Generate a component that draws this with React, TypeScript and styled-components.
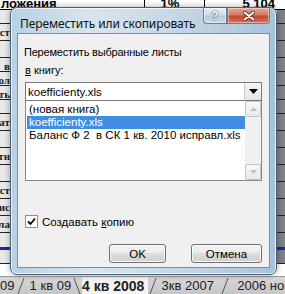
import styled, { createGlobalStyle } from "styled-components";

const GlobalStyle = createGlobalStyle`
  html, body {
    margin: 0;
    padding: 0;
    overflow: hidden;
  }
`;

const Desktop = styled.div`
  position: relative;
  width: 285px;
  height: 294px;
  overflow: hidden;
  background: #ffffff;
  font-family: "Liberation Sans", Arial, sans-serif;
  display: flex;
  flex-direction: column;
`;

const Sheet = styled.div`
  flex: 1;
  display: flex;
  flex-direction: column;
  overflow: hidden;
`;

const TopRow = styled.div`
  height: 9px;
  flex: none;
  display: grid;
  grid-template-columns: 145px 60px 1fr;
  border-bottom: 1px solid #000;
  font-weight: bold;
  font-size: 13px;
  line-height: 7px;
  overflow: hidden;
`;

const TopCell = styled.div<{ $align?: string }>`
  border-right: 1px solid #000;
  text-align: ${({ $align }) => $align || "left"};
  padding: 0 10px 0 1px;
  overflow: hidden;
  white-space: nowrap;
  &:last-child {
    border-right: none;
  }
`;

const SheetRow = styled.div<{ $h: number; $blue?: boolean }>`
  height: ${({ $h }) => $h}px;
  flex: none;
  display: flex;
  justify-content: space-between;
  border-bottom: ${({ $blue }) => ($blue ? "3px solid #1a2aa0" : "1px solid #222")};
  box-sizing: border-box;
`;

const LeftCell = styled.div`
  width: 10px;
  overflow: hidden;
  font-family: "Liberation Serif", serif;
  font-weight: bold;
  font-size: 11px;
  line-height: 16px;
  white-space: nowrap;
  direction: rtl;
  color: #222;
  background: #e9e9e9;
`;

const RightCell = styled.div`
  width: 8px;
  background: #7d8288;
`;

const TabBar = styled.div`
  height: 17px;
  flex: none;
  display: flex;
  align-items: center;
  background: linear-gradient(#d8d8d8, #c6c6c6);
  border-top: 1px solid #9a9a9a;
  font-family: "Liberation Sans", Arial, sans-serif;
  font-size: 13px;
  color: #222;
  white-space: nowrap;
  overflow: hidden;
`;

const SheetTab = styled.span<{ $active?: boolean; $w: number }>`
  flex: none;
  width: ${({ $w }) => $w}px;
  font-weight: ${({ $active }) => ($active ? "bold" : "normal")};
  font-size: ${({ $active }) => ($active ? 14 : 13)}px;
  background: ${({ $active }) => ($active ? "#f4f4f4" : "transparent")};
  padding-top: 1px;
  line-height: 16px;
`;

const Slant = ({ back }: { back?: boolean }) => (
  <svg width="10" height="17" viewBox="0 0 10 17" style={{ flex: "none" }}>
    <line x1={back ? 2 : 8} y1="1" x2={back ? 8 : 2} y2="17" stroke="#555" strokeWidth="1" />
  </svg>
);

/* dialog window over the sheet */
const Window = styled.div`
  position: absolute;
  left: 10px;
  top: 7px;
  width: 267px;
  height: 268px;
  box-sizing: border-box;
  border: 1px solid #4d5f74;
  border-radius: 7px;
  padding: 0 6px 6px;
  display: flex;
  flex-direction: column;
  background: linear-gradient(90deg, #b9d0e2 0%, #d7e5ef 30%, #c7d8e6 60%, #a9c3d9 100%);
  box-shadow: inset 0 0 0 1px rgba(255, 255, 255, 0.7), 0 0 6px rgba(0, 0, 0, 0.35);
`;

const TitleBar = styled.div`
  height: 25px;
  flex: none;
  display: flex;
  align-items: flex-start;
  justify-content: space-between;
`;

const Title = styled.span`
  font-family: "Noto Sans", "Liberation Sans", sans-serif;
  font-size: 12px;
  color: #111;
  margin: 7px 0 0 3px;
  letter-spacing: -0.1px;
`;

const CaptionButtons = styled.div`
  display: flex;
`;

const CaptionButton = styled.div<{ $close?: boolean }>`
  width: ${({ $close }) => ($close ? 43 : 24)}px;
  height: 16px;
  box-sizing: border-box;
  border: 1px solid #6d7c8c;
  border-top: none;
  border-radius: ${({ $close }) => ($close ? "0 0 4px 0" : "0 0 0 4px")};
  background: ${({ $close }) =>
    $close
      ? "linear-gradient(#e4a292 0%, #d67a67 45%, #c24a30 55%, #d6705a 100%)"
      : "linear-gradient(#e6eef5 0%, #d0dce8 45%, #b9c9d8 55%, #cbd8e4 100%)"};
  display: flex;
  align-items: center;
  justify-content: center;
  box-shadow: inset 0 0 0 1px rgba(255, 255, 255, 0.45);
`;

const HelpGlyph = styled.span`
  font-size: 12px;
  font-weight: bold;
  color: #fff;
  text-shadow: 0 0 1px #333, 0 0 1px #333;
`;

const Client = styled.div`
  flex: 1;
  background: #f0f0f0;
  border: 1px solid #7f8d9c;
  padding: 12px 7px 0 6px;
  display: flex;
  flex-direction: column;
  font-family: "Liberation Sans", Arial, sans-serif;
  font-size: 11px;
  color: #000;
`;

const Caption = styled.div`
  line-height: 13px;
  height: 13px;
  letter-spacing: -0.2px;
`;

const Label = styled.div`
  margin-top: 5px;
  line-height: 13px;
  height: 13px;
  padding-left: 1px;
`;

const Under = styled.span`
  text-decoration: underline;
`;

const Combo = styled.div`
  margin-top: 5px;
  margin-left: 1px;
  height: 19px;
  box-sizing: border-box;
  border: 1px solid #7a7a7a;
  background: #fff;
  display: flex;
  align-items: center;
  justify-content: space-between;
`;

const ComboText = styled.span`
  padding-left: 2px;
  font-size: 11.5px;
`;

const ComboArrow = styled.div`
  width: 16px;
  height: 17px;
  display: flex;
  align-items: center;
  justify-content: center;
  border-left: 1px solid #c8c8c8;
  background: linear-gradient(#f6f6f6, #e4e4e4);
`;

const ListBox = styled.div`
  margin-left: 1px;
  height: 80px;
  box-sizing: border-box;
  border: 1px solid #828790;
  border-top: none;
  background: #fff;
  display: flex;
`;

const Items = styled.div`
  flex: 1;
  padding: 2px 0 0 1px;
`;

const Item = styled.div<{ $selected?: boolean }>`
  height: 13px;
  line-height: 13px;
  padding-left: 2px;
  font-size: 11.5px;
  white-space: nowrap;
  background: ${({ $selected }) => ($selected ? "#3d8ee4" : "transparent")};
  color: ${({ $selected }) => ($selected ? "#fff" : "#000")};
`;

const ScrollBar = styled.div`
  width: 16px;
  display: flex;
  flex-direction: column;
  justify-content: space-between;
  background-color: #f3f3f3;
  background-image: repeating-conic-gradient(#e6e6e6 0% 25%, #fafafa 0% 50%);
  background-size: 2px 2px;
`;

const ScrollButton = styled.div`
  height: 16px;
  box-sizing: border-box;
  border: 1px solid #c5c5c5;
  border-radius: 2px;
  background: linear-gradient(#f8f8f8, #e9e9e9);
  display: flex;
  align-items: center;
  justify-content: center;
`;

const CheckRow = styled.label`
  margin-top: 34px;
  margin-left: 1px;
  display: flex;
  align-items: center;
  gap: 4px;
  height: 13px;
`;

const CheckBox = styled.span`
  width: 13px;
  height: 13px;
  box-sizing: border-box;
  border: 1px solid #8e8f8f;
  background: #fff;
  display: flex;
  align-items: center;
  justify-content: center;
`;

const CheckText = styled.span`
  font-size: 11.5px;
`;

const Buttons = styled.div`
  margin-top: 16px;
  display: flex;
  justify-content: flex-end;
  gap: 25px;
`;

const PushButton = styled.div<{ $w: number }>`
  width: ${({ $w }) => $w}px;
  height: 19px;
  box-sizing: border-box;
  border: 1px solid #707070;
  border-radius: 3px;
  background: linear-gradient(#f2f2f2 0%, #ebebeb 49%, #dddddd 50%, #cfcfcf 100%);
  box-shadow: inset 0 0 0 1px rgba(255, 255, 255, 0.8);
  display: flex;
  align-items: center;
  justify-content: center;
  font-size: 11.5px;
`;

const leftText = ["", "ост", "", "в", "кол", "ть", "", "рат", "", "тн", "", "ст", "рис", "ла", "", ""];
const rowHeights = [14, 17, 17, 14, 14, 14, 14, 17, 17, 17, 17, 17, 17, 17, 17, 14];

export default function App() {
  return (
    <Desktop>
      <GlobalStyle />
      <Sheet>
        <TopRow>
          <TopCell>ложения</TopCell>
          <TopCell $align="center">1%</TopCell>
          <TopCell $align="right">5 104</TopCell>
        </TopRow>
        {rowHeights.map((h, i) => (
          <SheetRow key={i} $h={h} $blue={i === 14}>
            <LeftCell>{leftText[i]}</LeftCell>
            <RightCell />
          </SheetRow>
        ))}
      </Sheet>
      <TabBar>
        <SheetTab $w={16}>09</SheetTab>
        <Slant />
        <SheetTab $w={46}>&nbsp;1 кв 09</SheetTab>
        <Slant back />
        <SheetTab $active $w={66}>4 кв 2008</SheetTab>
        <Slant />
        <SheetTab $w={62}>&nbsp;3кв 2007</SheetTab>
        <Slant />
        <SheetTab $w={70}>&nbsp;&nbsp;2006 нов</SheetTab>
      </TabBar>

      <Window>
        <TitleBar>
          <Title>Переместить или скопировать</Title>
          <CaptionButtons>
            <CaptionButton>
              <HelpGlyph>?</HelpGlyph>
            </CaptionButton>
            <CaptionButton $close>
              <svg width="12" height="10" viewBox="0 0 12 10">
                <path d="M1.5 1.5 L10.5 8.5 M10.5 1.5 L1.5 8.5" stroke="#5a2a20" strokeWidth="3.6" strokeLinecap="round" />
                <path d="M1.5 1.5 L10.5 8.5 M10.5 1.5 L1.5 8.5" stroke="#fff" strokeWidth="2" strokeLinecap="round" />
              </svg>
            </CaptionButton>
          </CaptionButtons>
        </TitleBar>
        <Client>
          <Caption>Переместить выбранные листы</Caption>
          <Label>
            <Under>в</Under> книгу:
          </Label>
          <Combo>
            <ComboText>koefficienty.xls</ComboText>
            <ComboArrow>
              <svg width="9" height="5" viewBox="0 0 9 5">
                <path d="M0 0 H9 L4.5 5 Z" fill="#000" />
              </svg>
            </ComboArrow>
          </Combo>
          <ListBox>
            <Items>
              <Item>(новая книга)</Item>
              <Item $selected>koefficienty.xls</Item>
              <Item>Баланс Ф 2&nbsp; в СК 1 кв. 2010 исправл.xls</Item>
            </Items>
            <ScrollBar>
              <ScrollButton>
                <svg width="7" height="4" viewBox="0 0 7 4">
                  <path d="M0 4 H7 L3.5 0 Z" fill="#c2c2c2" />
                </svg>
              </ScrollButton>
              <ScrollButton>
                <svg width="7" height="4" viewBox="0 0 7 4">
                  <path d="M0 0 H7 L3.5 4 Z" fill="#c2c2c2" />
                </svg>
              </ScrollButton>
            </ScrollBar>
          </ListBox>
          <CheckRow>
            <CheckBox>
              <svg width="9" height="9" viewBox="0 0 9 9">
                <path d="M1 4.5 L3.5 7 L8 1.5" stroke="#000" strokeWidth="1.8" fill="none" />
              </svg>
            </CheckBox>
            <CheckText>
              Создавать <Under>к</Under>опию
            </CheckText>
          </CheckRow>
          <Buttons>
            <PushButton $w={57}>OK</PushButton>
            <PushButton $w={71}>Отмена</PushButton>
          </Buttons>
        </Client>
      </Window>
    </Desktop>
  );
}
